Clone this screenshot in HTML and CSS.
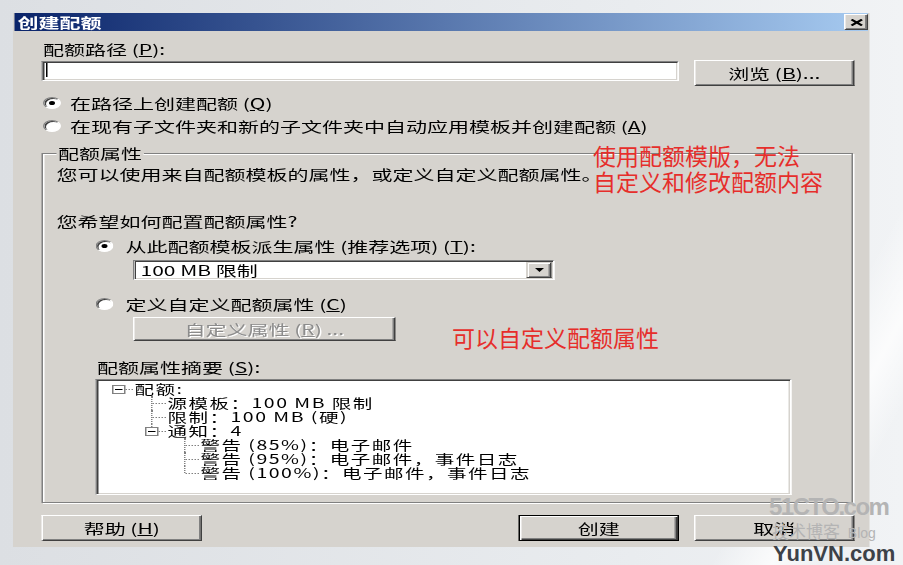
FILE: index.html
```html
<!DOCTYPE html>
<html>
	<head>
		<meta charset="UTF-8">
		<title>创建配额</title>
		<link rel="stylesheet" href="styles.css">
	</head>
	<body>
		<div class="screen">
			<!-- the dialog is laid out at its own size and stretched sideways, like the screenshot -->
			<div class="dialog">
				<div class="titlebar">
					<span class="title">创建配额</span>
					<span class="close">
						<svg width="9" height="7" viewBox="0 0 9 7"><path d="M1 0.5L8 6.5M8 0.5L1 6.5" stroke="#000" stroke-width="1.8"/></svg>
					</span>
				</div>
				<div class="body">
					<div class="path-label">配额路径 (<u>P</u>):</div>
					<div class="path-row">
						<div class="input sunken"><span class="caret"></span></div>
						<div class="btn browse">浏览 (<u>B</u>)...</div>
					</div>
					<div class="opt first"><span class="radio on"></span>在路径上创建配额 (<u>Q</u>)</div>
					<div class="opt second"><span class="radio"></span>在现有子文件夹和新的子文件夹中自动应用模板并创建配额 (<u>A</u>)</div>

					<fieldset class="group">
						<legend>配额属性</legend>
						<div class="desc">您可以使用来自配额模板的属性，或定义自定义配额属性。</div>
						<div class="ask">您希望如何配置配额属性?</div>
						<div class="opt tpl"><span class="radio on"></span>从此配额模板派生属性 (推荐选项) (<u>T</u>):</div>
						<div class="select sunken">
							<span class="val">100 MB 限制</span>
							<span class="drop"><i class="arrow"></i></span>
						</div>
						<div class="opt custom"><span class="radio"></span>定义自定义配额属性 (<u>C</u>)</div>
						<div class="btn disabled">自定义属性 (<u>R</u>) ...</div>
						<div class="sum-label">配额属性摘要 (<u>S</u>):</div>
						<div class="tree sunken">
							<div class="row"><span class="cell box"><i class="minus"></i></span>配额:</div>
							<div class="row"><span class="cell"></span><span class="cell tee"></span>源模板：100 MB 限制</div>
							<div class="row"><span class="cell"></span><span class="cell tee"></span>限制：100 MB (硬)</div>
							<div class="row"><span class="cell"></span><span class="cell box up"><i class="minus"></i></span>通知：4</div>
							<div class="row"><span class="cell"></span><span class="cell"></span><span class="cell tee"></span>警告 (85%)：电子邮件</div>
							<div class="row"><span class="cell"></span><span class="cell"></span><span class="cell tee"></span>警告 (95%)：电子邮件，事件日志</div>
							<div class="row"><span class="cell"></span><span class="cell"></span><span class="cell ell"></span>警告 (100%)：电子邮件，事件日志</div>
						</div>
					</fieldset>

					<div class="actions">
						<div class="btn">帮助 (<u>H</u>)</div>
						<div class="btn default">创建</div>
						<div class="btn">取消</div>
					</div>
				</div>
			</div>

			<div class="note note-top">使用配额模版，无法<br>自定义和修改配额内容</div>
			<div class="note note-mid">可以自定义配额属性</div>

			<div class="mark">
				<div class="m1">51CTO.com</div>
				<div class="m2">技术博客 <span>Blog</span></div>
				<div class="m3">YunVN.com</div>
			</div>
		</div>
	</body>
</html>
```

FILE: styles.css
```css
*{
	margin: 0;
	padding: 0;
	box-sizing: border-box;
}
body{
	background: #e4e7ea;
	font-family: "Noto Sans CJK SC", sans-serif;
}
.screen{
	position: relative;
	width: 903px;
	height: 565px;
	overflow: hidden;
	background:
		linear-gradient(118deg, transparent 0, transparent 84%, rgba(255,255,255,.75) 89%, transparent 93%),
		linear-gradient(to right, #dcdfe3, #e9ecef 70%, #f1f3f5);
}
/* 对话框按原始尺寸排版，再整体横向拉伸 1.5 倍 */
.dialog{
	width: 571px;
	margin: 13px 0 0 13px;
	background: #d6d3ce;
	color: #000;
	font-size: 14px;
	line-height: 16px;
	transform: scaleX(1.5);
	transform-origin: 0 0;
}
.titlebar{
	height: 18px;
	margin: 0 1px;
	display: flex;
	align-items: center;
	justify-content: space-between;
	background: linear-gradient(to right, #0a246a, #a6caf0);
}
.title{
	padding-left: 2px;
	color: #fff;
	font-weight: bold;
	line-height: 18px;
}
.close{
	width: 16px;
	height: 16px;
	display: flex;
	align-items: center;
	justify-content: center;
	background: #d6d3ce;
	border: 1px solid;
	border-color: #fff #404040 #404040 #fff;
	box-shadow: inset -1px -1px 0 #808080;
}
.body{
	padding: 10px 10px 6px 19px;
}
u{
	text-decoration: underline;
	text-underline-offset: 1px;
}
.sunken{
	background: #fff;
	border: 1px solid;
	border-color: #808080 #fff #fff #808080;
	box-shadow: inset 1px 1px 0 #404040, inset -1px -1px 0 #d6d3ce;
}
.btn{
	width: 107px;
	height: 26px;
	display: flex;
	align-items: center;
	justify-content: center;
	background: #d6d3ce;
	border: 1px solid;
	border-color: #fff #404040 #404040 #fff;
	box-shadow: inset -1px -1px 0 #808080;
	white-space: nowrap;
}
.btn.default{
	border-color: #000;
	box-shadow: inset 1px 1px 0 #fff, inset -1px -1px 0 #404040, inset -2px -2px 0 #808080;
}
.btn.disabled{
	width: 175px;
	height: 24px;
	margin: 5px 0 0 51px;
	color: #8c8c8c;
	text-shadow: 1px 1px 0 #fff;
}
.path-label{
	margin-left: 1px;
}
.path-row{
	display: flex;
	align-items: flex-start;
	margin-top: 3px;
}
.input{
	width: 425px;
	height: 20px;
	margin-top: 1px;
}
.caret{
	display: block;
	width: 1px;
	height: 14px;
	margin: 1px 0 0 2px;
	background: #000;
}
.browse{
	margin-left: 10px;
}
.opt{
	display: flex;
	align-items: center;
	height: 16px;
	white-space: nowrap;
}
.opt.first{
	margin: 9px 0 0 1px;
}
.opt.second{
	margin: 7px 0 0 1px;
}
.radio{
	flex: none;
	width: 12px;
	height: 12px;
	margin-right: 6px;
	display: flex;
	align-items: center;
	justify-content: center;
	border-radius: 50%;
	background: #fff;
	border: 1px solid;
	border-color: #808080 #fff #fff #808080;
	box-shadow: inset 1px 1px 0 #404040;
}
.radio.on::after{
	content: "";
	width: 4px;
	height: 4px;
	border-radius: 50%;
	background: #000;
}
.group{
	width: 541px;
	min-width: 0;
	margin-top: 11px;
	padding: 5px 0 7px 9px;
	border: 1px solid #808080;
	box-shadow: inset 1px 1px 0 #fff, 1px 1px 0 #fff;
}
.group legend{
	padding: 0 1px;
	line-height: 16px;
	background: #d6d3ce;
}
.ask{
	margin-top: 31px;
}
.group .opt{
	margin-left: 26px;
}
.group .opt .radio{
	margin-right: 8px;
}
.opt.tpl{
	margin-top: 9px;
}
.opt.custom{
	margin-top: 16px;
}
.select{
	width: 281px;
	height: 20px;
	margin: 6px 0 0 51px;
	display: flex;
	padding: 1px;
}
.select .val{
	flex: 1;
	padding-left: 3px;
	line-height: 16px;
}
.select .drop{
	width: 17px;
	height: 16px;
	display: flex;
	align-items: center;
	justify-content: center;
	background: #d6d3ce;
	border: 1px solid;
	border-color: #d6d3ce #404040 #404040 #d6d3ce;
	box-shadow: inset 1px 1px 0 #fff, inset -1px -1px 0 #808080;
}
.arrow{
	width: 0;
	height: 0;
	border-left: 3.5px solid transparent;
	border-right: 3.5px solid transparent;
	border-top: 4px solid #000;
}
.sum-label{
	margin: 18px 0 0 27px;
}
.tree{
	width: 464px;
	height: 116px;
	margin: 4px 0 0 26px;
	padding: 2px 0 0 3px;
	font-size: 13px;
	letter-spacing: 1px;
}
.row{
	display: flex;
	height: 14px;
	line-height: 14px;
	white-space: nowrap;
}
/* 每一级缩进 22px，虚线画在格子里 */
.cell{
	flex: none;
	position: relative;
	width: 22px;
	height: 14px;
}
.cell.tee::before,
.cell.ell::before,
.cell.up::before{
	content: "";
	position: absolute;
	left: 11px;
	top: 0;
	height: 14px;
	border-left: 1px dotted #808080;
}
.cell.ell::before{
	height: 7px;
}
.cell.up::before{
	height: 3px;
}
.cell.tee::after,
.cell.ell::after,
.cell.box::after{
	content: "";
	position: absolute;
	left: 12px;
	right: 1px;
	top: 7px;
	border-top: 1px dotted #808080;
}
.cell.box::after{
	left: 16px;
}
.minus{
	position: absolute;
	left: 7px;
	top: 3px;
	width: 9px;
	height: 9px;
	border: 1px solid #808080;
	background: #fff;
}
.minus::after{
	content: "";
	position: absolute;
	left: 1px;
	top: 3px;
	width: 5px;
	height: 1px;
	background: #000;
}
.actions{
	display: flex;
	margin-top: 12px;
}
.actions .default{
	margin-left: auto;
	margin-right: 10px;
}
/* 截图上后加的红字说明 */
.note{
	position: absolute;
	color: #e62e2b;
	font-size: 23px;
	line-height: 26px;
	white-space: nowrap;
}
.note-top{
	left: 593px;
	top: 142px;
}
.note-mid{
	left: 452px;
	top: 324px;
}
.mark{
	position: absolute;
	left: 769px;
	top: 492px;
	white-space: nowrap;
}
.mark .m1{
	font-family: "Liberation Sans", sans-serif;
	font-weight: bold;
	font-size: 24px;
	line-height: 30px;
	letter-spacing: -1.5px;
	color: #b4b4b4;
}
.mark .m2{
	margin-left: 3px;
	font-size: 17px;
	line-height: 17px;
	color: #b4b4b4;
}
.mark .m2 span{
	font-family: "Liberation Sans", sans-serif;
	font-size: 14px;
	margin-left: 4px;
}
.mark .m3{
	margin-left: 4px;
	font-family: "Liberation Sans", sans-serif;
	font-weight: bold;
	font-size: 22px;
	line-height: 24px;
	color: #3d4248;
}
```
